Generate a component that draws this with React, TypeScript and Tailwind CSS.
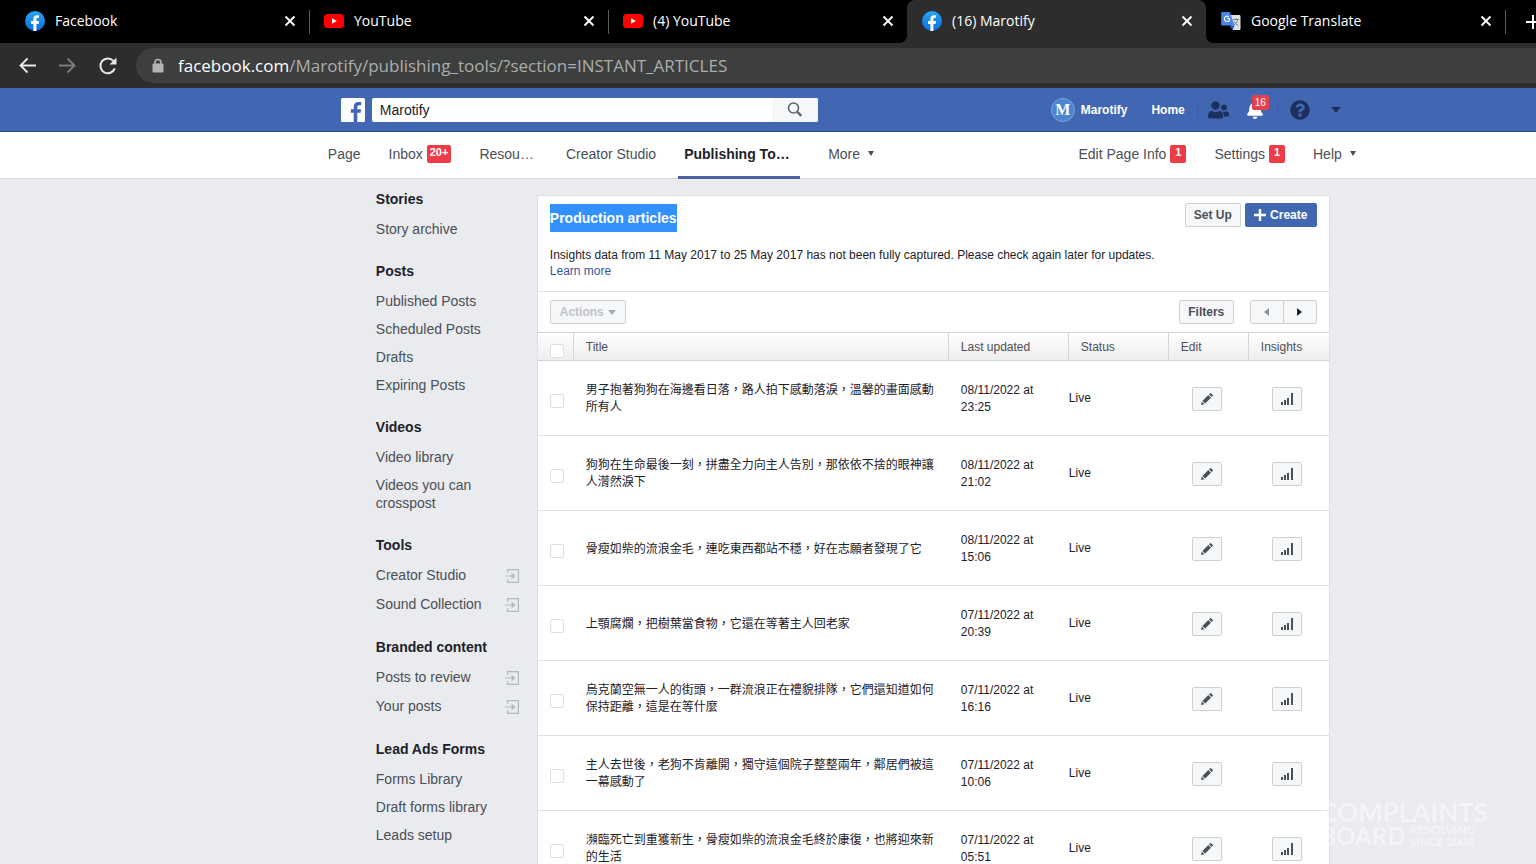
import type { ReactNode } from 'react'
import clsx from 'clsx'
import { FaBell, FaQuestionCircle } from 'react-icons/fa'

type BrowserTab = { title: string; icon: 'facebook' | 'youtube' | 'translate'; active?: boolean; divider?: boolean }
type SidebarGroup = { title: string; items: string[]; external?: boolean }
type Article = { title: string; date: string; time: string }

const tabs: BrowserTab[] = [
  { title: 'Facebook', icon: 'facebook' },
  { title: 'YouTube', icon: 'youtube', divider: true },
  { title: '(4) YouTube', icon: 'youtube', divider: true },
  { title: '(16) Marotify', icon: 'facebook', active: true },
  { title: 'Google Translate', icon: 'translate' },
]

const groups: SidebarGroup[] = [
  { title: 'Stories', items: ['Story archive'] },
  { title: 'Posts', items: ['Published Posts', 'Scheduled Posts', 'Drafts', 'Expiring Posts'] },
  { title: 'Videos', items: ['Video library', 'Videos you can crosspost'] },
  { title: 'Tools', items: ['Creator Studio', 'Sound Collection'], external: true },
  { title: 'Branded content', items: ['Posts to review', 'Your posts'], external: true },
  { title: 'Lead Ads Forms', items: ['Forms Library', 'Draft forms library', 'Leads setup'] },
]

const articles: Article[] = [
  { title: '男子抱著狗狗在海邊看日落，路人拍下感動落淚，溫馨的畫面感動所有人', date: '08/11/2022', time: '23:25' },
  { title: '狗狗在生命最後一刻，拼盡全力向主人告別，那依依不捨的眼神讓人潸然淚下', date: '08/11/2022', time: '21:02' },
  { title: '骨瘦如柴的流浪金毛，連吃東西都站不穩，好在志願者發現了它', date: '08/11/2022', time: '15:06' },
  { title: '上顎腐爛，把樹葉當食物，它還在等著主人回老家', date: '07/11/2022', time: '20:39' },
  { title: '烏克蘭空無一人的街頭，一群流浪正在禮貌排隊，它們還知道如何保持距離，這是在等什麼', date: '07/11/2022', time: '16:16' },
  { title: '主人去世後，老狗不肯離開，獨守這個院子整整兩年，鄰居們被這一幕感動了', date: '07/11/2022', time: '10:06' },
  { title: '瀕臨死亡到重獲新生，骨瘦如柴的流浪金毛終於康復，也將迎來新的生活', date: '07/11/2022', time: '05:51' },
]

const buttonStyle =
  'flex h-6 items-center justify-center rounded-xs border border-[#ced0d4] bg-[#f6f7f9] text-xs font-bold text-[#4b4f56]'

function TabIcon({ icon }: { icon: BrowserTab['icon'] }) {
  if (icon === 'youtube') {
    return (
      <svg viewBox="0 0 20 14" className="h-3.5 w-5 shrink-0">
        <rect width="20" height="14" rx="3.5" fill="#f00" />
        <path d="M8 4.2v5.6L12.8 7z" fill="#fff" />
      </svg>
    )
  }
  if (icon === 'translate') {
    return (
      <svg viewBox="0 0 20 20" className="size-5 shrink-0">
        <path d="M8 4h10.2c.7 0 1.3.6 1.3 1.300v12.400c0 .7-.6 1.300-1.300 1.300H12z" fill="#dfe3e8" />
        <path d="M8.500 14.500h5.200L11.500 19z" fill="#2a56c6" />
        <path d="M1.500 1h7.200l5 13.500H1.500C.8 14.500.2 13.900.2 13.200V2.300C.2 1.600.8 1 1.500 1z" fill="#4a86e8" />
        <path d="M12 8.500h6M15 7.300v1.200M16.800 8.500c-.4 2.500-2 4.300-4 5.600M13.300 10.300c.8 2 2.200 3.400 4 4.200" fill="none" stroke="#6b7f8e" strokeWidth="1" />
        <path d="M8.900 7.500H6.200M8.700 7.500c.2 2-1 3-2.600 3a2.700 2.700 0 1 1 1.800-4.700" fill="none" stroke="#fff" strokeWidth="1.100" />
      </svg>
    )
  }
  return (
    <svg viewBox="0 0 20 20" className="size-5 shrink-0">
      <defs>
        <linearGradient id="fb-round" x1="0" y1="0" x2="0" y2="1">
          <stop offset="0" stopColor="#2aa4f4" />
          <stop offset="1" stopColor="#0a6fe0" />
        </linearGradient>
      </defs>
      <circle cx="10" cy="10" r="10" fill="url(#fb-round)" />
      <path
        d="M8.400 19.900V13H6v-2.900h2.400V8.200c0-2.500 1.300-4 3.700-4 .9 0 1.900.2 1.900.2v2.400h-1.200c-1.100 0-1.400.7-1.400 1.400v1.900h2.600l-.5 2.900h-2.100v6.900a10 10 0 0 1-3 0z"
        fill="#fff"
      />
    </svg>
  )
}

function BrowserChrome() {
  return (
    <div className="bg-[#2d2d2d] font-['Open_Sans',sans-serif] text-white">
      <div className="flex h-[43px] overflow-hidden bg-black pl-2.5">
        {tabs.map((tab, index) => (
          <div
            key={index}
            className={clsx(
              'relative flex w-[299px] shrink-0 items-center pr-[13px] pb-px pl-[15px]',
              tab.active &&
                'rounded-t-lg bg-[#2d2d2d] before:absolute before:bottom-0 before:-left-2 before:size-2 before:bg-[radial-gradient(circle_at_0_0,transparent_8px,#2d2d2d_8px)] after:absolute after:-right-2 after:bottom-0 after:size-2 after:bg-[radial-gradient(circle_at_100%_0,transparent_8px,#2d2d2d_8px)]',
            )}
          >
            {tab.divider && <span className="absolute top-2.5 left-0 h-6 w-px bg-[#5a5a5a]" />}
            <TabIcon icon={tab.icon} />
            <span className="ml-2.5 grow text-sm">{tab.title}</span>
            <button type="button" aria-label={`Close ${tab.title}`}>
              <svg viewBox="0 0 12 12" className="size-3">
                <path d="M1.500 1.500l9 9M10.500 1.500l-9 9" stroke="#fff" strokeWidth="1.900" />
              </svg>
            </button>
          </div>
        ))}
        <div className="flex shrink-0 items-center">
          <span className="h-6 w-px bg-[#5a5a5a]" />
          <button type="button" aria-label="New tab" className="ml-5">
            <svg viewBox="0 0 14 14" className="size-3.5">
              <path d="M7 0v14M0 7h14" stroke="#fff" strokeWidth="2" />
            </svg>
          </button>
        </div>
      </div>

      <div className="flex h-[45px] items-center pl-[18px]">
        <button type="button" aria-label="Back" className="mr-5">
          <svg viewBox="0 0 20 20" className="size-5" fill="none" stroke="#e8e8e8" strokeWidth="1.800">
            <path d="M18 9.500H3M9.500 2.500l-7 7 7 7" />
          </svg>
        </button>
        <button type="button" aria-label="Forward" className="mr-5">
          <svg viewBox="0 0 20 20" className="size-5" fill="none" stroke="#7c7c7c" strokeWidth="1.800">
            <path d="M1 9.500h15M9.500 2.500l7 7-7 7" />
          </svg>
        </button>
        <button type="button" aria-label="Reload" className="mr-[18px]">
          <svg viewBox="0 0 20 20" className="size-5" fill="none" stroke="#e8e8e8" strokeWidth="2">
            <path d="M16.800 12.300A7.400 7.400 0 1 1 15.300 4.800L17 6.500" />
            <path d="M18.500 1.500v7h-7z" fill="#e8e8e8" stroke="none" />
          </svg>
        </button>
        <div className="flex h-[35px] grow items-center rounded-l-full bg-[#3d3e3e] pl-4">
          <svg viewBox="0 0 12 16" className="h-4 w-3">
            <path d="M3 6.500V4.500a3 3 0 0 1 6 0v2" fill="none" stroke="#b4b4b4" strokeWidth="1.600" />
            <rect x=".5" y="5.500" width="11" height="9" rx="1.200" fill="#b4b4b4" />
          </svg>
          <span className="ml-3.5 text-[17px] text-[#adadad]">
            <span className="text-white">facebook.com</span>/Marotify/publishing_tools/?section=INSTANT_ARTICLES
          </span>
        </div>
      </div>
    </div>
  )
}

function TopBar() {
  return (
    <header className="border-b border-[#29487d] bg-[#4267b2]">
      <div className="mx-auto flex h-[43px] max-w-[1008px] items-center">
        <a href="#" aria-label="Facebook">
          <svg viewBox="0 0 24 24" className="size-6">
            <rect width="24" height="24" rx="1.500" fill="#fff" />
            <path
              d="M16.300 24v-9.300h3.300l.5-3.500h-3.800V9c0-1 .4-1.700 1.900-1.700h2V4.100c-.4-.1-1.500-.2-2.800-.2-2.900 0-4.700 1.700-4.700 4.800v2.500H9.800v3.500h2.900V24z"
              fill="#4267b2"
            />
          </svg>
        </a>
        <form className="ml-[7px] flex h-6 w-[446px] overflow-hidden rounded-xs bg-white">
          <input
            aria-label="Search"
            defaultValue="Marotify"
            className="min-w-0 grow px-2 text-sm text-[#1d2129] outline-none"
          />
          <button type="button" aria-label="Search" className="flex w-[46px] items-center justify-center bg-[#f6f7f9]">
            <svg viewBox="0 0 16 16" className="size-4" fill="none" stroke="#5f646c">
              <circle cx="6.500" cy="6" r="5" strokeWidth="1.600" />
              <path d="M10.300 9.800l4 4" strokeWidth="2.400" />
            </svg>
          </button>
        </form>
        <nav className="ml-auto flex items-center text-xs font-bold text-white">
          <a href="#" className="flex items-center">
            <span className="mr-1.5 flex size-6 items-center justify-center rounded-full border border-[#79a5dc] bg-[#4a86cf] font-['Liberation_Serif',serif] text-base">
              M
            </span>
            Marotify
          </a>
          <a href="#" className="ml-6">
            Home
          </a>
          <span className="mr-2.5 ml-3 h-[18px] w-px bg-[#3b5fa6]" />
          <button type="button" aria-label="Friend requests">
            <svg viewBox="0 0 21 18" className="h-[18px] w-[21px]" fill="#1d2f5c">
              <circle cx="7.500" cy="4.500" r="4.200" />
              <path d="M0 15.500c0-3.500 1.500-5.500 4-5.500.8.500 2 1 3.500 1s2.700-.5 3.500-1c2.500 0 4 2 4 5.500 0 1.500-.7 2-2 2H2c-1.300 0-2-.5-2-2z" />
              <circle cx="16" cy="6.500" r="2.900" />
              <path d="M13.500 10.200c.7.400 1.500.700 2.500.7s1.800-.3 2.400-.7c1.700.1 2.600 1.600 2.600 3.900 0 1-.5 1.400-1.400 1.400H16c0-2.300-.9-4.100-2.500-5.300z" />
            </svg>
          </button>
          <button type="button" aria-label="Notifications" className="relative ml-[17px]">
            <FaBell className="size-[18px] text-white" />
            <span className="absolute -top-1.5 left-1.5 rounded-xs bg-[#e3404e] px-[3px] text-[10px] leading-[15px] font-normal">
              16
            </span>
          </button>
          <span className="mr-3 ml-[13px] h-3 w-px bg-[#3b5fa6]" />
          <button type="button" aria-label="Help">
            <FaQuestionCircle className="size-5 text-[#1d2f5c]" />
          </button>
          <button type="button" aria-label="Account" className="mr-2 ml-[21px]">
            <svg viewBox="0 0 10 6" className="h-1.5 w-2.5">
              <path d="M0 0h10L5 6z" fill="#1d2f5c" />
            </svg>
          </button>
        </nav>
      </div>
    </header>
  )
}

function Badge({ children }: { children: ReactNode }) {
  return (
    <span className="ml-1 flex h-[18px] min-w-4 items-center justify-center rounded-xs bg-[#ee3b48] px-[3px] pb-px text-[11px] font-bold text-white">
      {children}
    </span>
  )
}

function SmallCaret() {
  return (
    <svg viewBox="0 0 6 5" className="ml-2 h-[5px] w-1.5">
      <path d="M0 0h6L3 5z" fill="#4b4f56" />
    </svg>
  )
}

function PageNav() {
  return (
    <nav className="border-b border-[#d8dadf] bg-white">
      <div className="mx-auto flex h-[46px] max-w-[1034px] text-sm text-[#4b4f56]">
        <a href="#" className="flex items-center pb-[3px]">Page</a>
        <a href="#" className="ml-7 flex items-center pb-[3px]">
          Inbox <Badge>20+</Badge>
        </a>
        <a href="#" className="ml-7 flex items-center pb-[3px]">Resou…</a>
        <a href="#" className="ml-8 flex items-center pb-[3px]">Creator Studio</a>
        <a
          href="#"
          className="-mb-px ml-[22px] flex w-[122px] items-center border-b-3 border-[#4a629c] pl-1.5 font-bold text-[#1d2129]"
        >
          Publishing To…
        </a>
        <button type="button" className="ml-7 flex items-center pb-[3px]">
          More <SmallCaret />
        </button>
        <a href="#" className="ml-auto flex items-center pb-[3px]">
          Edit Page Info <Badge>1</Badge>
        </a>
        <a href="#" className="ml-7 flex items-center pb-[3px]">
          Settings <Badge>1</Badge>
        </a>
        <button type="button" className="mr-1.5 ml-7 flex items-center pb-[3px]">
          Help <SmallCaret />
        </button>
      </div>
    </nav>
  )
}

function Sidebar() {
  return (
    <aside className="flex w-[177px] shrink-0 flex-col gap-[19px] pt-[11px] pr-[18px] pl-4 text-sm leading-[18px]">
      {groups.map((group) => (
        <section key={group.title}>
          <h2 className="mb-[7px] font-bold text-[#1d2129]">{group.title}</h2>
          <ul>
            {group.items.map((item) => (
              <li key={item}>
                <a
                  href="#"
                  className={clsx(
                    'flex items-start justify-between py-[5px] text-[#4b4f56]',
                    group.external && 'h-[29px]',
                  )}
                >
                  <span className="max-w-28">{item}</span>
                  {group.external && (
                    <svg viewBox="0 0 14 16" className="mt-0.5 h-4 w-3.5" fill="none" stroke="#b4b7bd" strokeWidth="1.200">
                      <path d="M2.600 5V1.600h10.800v12.800H2.600V11M0 8h8" />
                      <path d="M6.500 4.500L10.500 8l-4 3.500z" fill="#b4b7bd" stroke="none" />
                    </svg>
                  )}
                </a>
              </li>
            ))}
          </ul>
        </section>
      ))}
    </aside>
  )
}

function ArticleCheckbox({ label }: { label: string }) {
  return (
    <input
      type="checkbox"
      aria-label={label}
      className="block size-3.5 appearance-none rounded-xs border border-[#dddfe2] bg-white"
    />
  )
}

function ArticleRow({ article }: { article: Article }) {
  return (
    <tr className="h-[75px] text-[#1d2129]">
      <td className="border-b border-[#dddfe2] pt-1.5 pl-3">
        <ArticleCheckbox label={article.title} />
      </td>
      <td className="border-b border-[#dddfe2] px-3 pt-0.5 leading-[17px]">{article.title}</td>
      <td className="border-b border-[#dddfe2] px-3 pt-0.5 leading-[17px]">
        {article.date} at
        <br />
        {article.time}
      </td>
      <td className="border-b border-[#dddfe2]">Live</td>
      <td className="border-b border-[#dddfe2] pt-0.5 pl-[23px]">
        <button type="button" aria-label="Edit" className={clsx(buttonStyle, 'w-[30px]')}>
          <svg viewBox="0 0 12 12" className="size-3" fill="#4b4f56">
            <path d="M0 12l.8-3.400 2.600 2.600zM1.400 7.900l5.900-5.900 2.700 2.700-5.900 5.900zM8 1.300l.9-.9a1 1 0 0 1 1.400 0l1.300 1.300a1 1 0 0 1 0 1.400l-.9.9z" />
          </svg>
        </button>
      </td>
      <td className="border-b border-[#dddfe2] pt-0.5 pl-[23px]">
        <button type="button" aria-label="Insights" className={clsx(buttonStyle, 'w-[30px]')}>
          <svg viewBox="0 0 12 12" className="size-3" fill="#4b4f56">
            <path d="M0 9h2v3H0zM3 7h2v5H3zM6 5h2v7H6zM10 0h2v12h-2z" />
          </svg>
        </button>
      </td>
    </tr>
  )
}

function ArticlesPanel() {
  return (
    <main className="mt-4 min-w-0 grow border border-[#dddfe2] bg-white text-xs text-[#1d2129]">
      <div className="flex items-start justify-between px-3 pt-2">
        <h1 className="bg-[#3390ff] text-sm leading-7 font-bold text-white">Production articles</h1>
        <div className="-mt-px flex gap-1">
          <button type="button" className={clsx(buttonStyle, 'w-14')}>
            Set Up
          </button>
          <button
            type="button"
            className="flex h-6 w-[72px] items-center justify-center gap-1 rounded-xs bg-[#4267b2] text-xs font-bold text-white"
          >
            <svg viewBox="0 0 12 12" className="size-3">
              <path d="M6 0v12M0 6h12" stroke="#fff" strokeWidth="2.400" />
            </svg>
            Create
          </button>
        </div>
      </div>
      <p className="px-3 pt-[15px] pb-3 leading-4">
        Insights data from 11 May 2017 to 25 May 2017 has not been fully captured. Please check again later for
        updates.
        <br />
        <a href="#" className="text-[#365899]">
          Learn more
        </a>
      </p>

      <div className="flex h-[41px] items-center border-t border-[#dddfe2] px-3">
        <button
          type="button"
          disabled
          className="flex h-6 w-19 items-center justify-center gap-1 rounded-xs border border-[#ced0d4] bg-[#f6f7f9] font-bold text-[#bec3c9]"
        >
          Actions
          <svg viewBox="0 0 8 5" className="h-[5px] w-2">
            <path d="M0 0h8L4 5z" fill="#a6abb3" />
          </svg>
        </button>
        <button type="button" className={clsx(buttonStyle, 'mr-4 ml-auto w-[55px]')}>
          Filters
        </button>
        <button type="button" aria-label="Previous page" disabled className={clsx(buttonStyle, 'w-[34px] rounded-r-none')}>
          <svg viewBox="0 0 5 8" className="h-2 w-[5px]">
            <path d="M5 0v8L0 4z" fill="#90949c" />
          </svg>
        </button>
        <button type="button" aria-label="Next page" className={clsx(buttonStyle, '-ml-px w-[34px] rounded-l-none')}>
          <svg viewBox="0 0 5 8" className="h-2 w-[5px]">
            <path d="M0 0v8l5-4z" fill="#1d2129" />
          </svg>
        </button>
      </div>

      <table className="w-full table-fixed border-separate border-spacing-0">
        <thead>
          <tr className="h-[29px] bg-linear-to-b from-white to-[#ededee] text-left text-[#4b4f56]">
            <th className="w-9 border-y border-r border-[#d3d5d9] pt-2 pl-3">
              <ArticleCheckbox label="Select all articles" />
            </th>
            <th className="border-y border-r border-[#d3d5d9] px-3 font-normal">Title</th>
            <th className="w-[120px] border-y border-r border-[#d3d5d9] px-3 font-normal">Last updated</th>
            <th className="w-[100px] border-y border-r border-[#d3d5d9] px-3 font-normal">Status</th>
            <th className="w-20 border-y border-r border-[#d3d5d9] px-3 font-normal">Edit</th>
            <th className="w-20 border-y border-[#d3d5d9] px-3 font-normal">Insights</th>
          </tr>
        </thead>
        <tbody>
          {articles.map((article) => (
            <ArticleRow key={article.title} article={article} />
          ))}
        </tbody>
      </table>
    </main>
  )
}

function Watermark() {
  return (
    <div className="pointer-events-none fixed right-12 bottom-4 font-['Lato',sans-serif] font-bold text-white/45">
      <div className="text-[26px] leading-6">COMPLAINTS</div>
      <div className="flex items-center gap-1">
        <span className="text-2xl leading-6">BOARD</span>
        <span className="text-xs leading-3">
          RESOLVING
          <br />
          SINCE 2004
        </span>
      </div>
    </div>
  )
}

function App() {
  return (
    <div className="min-h-screen overflow-hidden bg-[#e9ebee] font-['Liberation_Sans','Noto_Sans_CJK_TC',sans-serif]">
      <BrowserChrome />
      {/* the page is a little wider than the window and runs off its right edge */}
      <div className="w-[110%]">
        <TopBar />
        <PageNav />
        <div className="mx-auto flex max-w-[970px]">
          <Sidebar />
          <ArticlesPanel />
        </div>
      </div>
      <Watermark />
    </div>
  )
}

export default App
